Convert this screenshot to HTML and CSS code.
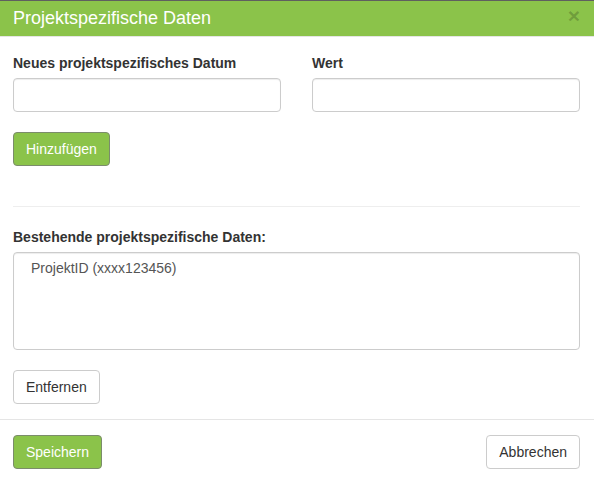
FILE: index.html
```html
<!DOCTYPE html>
<html lang="de">
<head>
<meta charset="utf-8">
<title>Projektspezifische Daten</title>
<link rel="stylesheet" href="styles.css">
</head>
<body>
<div class="modal">
  <div class="modal-header">
    <h4 class="modal-title">Projektspezifische Daten</h4>
    <span class="close">&times;</span>
  </div>
  <div class="modal-body">
    <div class="row">
      <div class="col">
        <label class="label">Neues projektspezifisches Datum</label>
        <div class="input"></div>
      </div>
      <div class="col">
        <label class="label">Wert</label>
        <div class="input"></div>
      </div>
    </div>
    <button class="btn btn-green btn-add">Hinzufügen</button>
    <hr class="divider">
    <label class="label">Bestehende projektspezifische Daten:</label>
    <div class="listbox">
      <div class="option">ProjektID (xxxx123456)</div>
    </div>
    <button class="btn btn-default btn-remove">Entfernen</button>
  </div>
  <div class="modal-footer">
    <button class="btn btn-green">Speichern</button>
    <button class="btn btn-default">Abbrechen</button>
  </div>
</div>
</body>
</html>
```

FILE: styles.css
```css
* { box-sizing: border-box; }

html, body {
  margin: 0;
  padding: 0;
  background: #fff;
}

body {
  font-family: "Liberation Sans", Arial, sans-serif;
  font-size: 14px;
  line-height: 20px;
  color: #333;
  border-top: 1px solid #5f5f5f;
}

.modal {
  width: 594px;
}

.modal-header {
  height: 36px;
  background: #8bc34a;
  border-bottom: 1px solid #e5e5e5;
  padding: 0 13px;
  display: flex;
  align-items: center;
  justify-content: space-between;
}

.modal-title {
  margin: 0;
  font-size: 18px;
  font-weight: normal;
  line-height: 35px;
  color: #fff;
}

.close {
  font-size: 21px;
  font-weight: bold;
  line-height: 1;
  color: rgba(0, 0, 0, 0.2);
  margin-right: 1px;
  margin-top: -7px;
}

.modal-body {
  padding: 16px 14px 15px 13px;
}

.row {
  display: flex;
  gap: 31px;
}

.col {
  flex: 1;
}

.label {
  display: block;
  font-weight: bold;
  margin-bottom: 5px;
}

.input {
  height: 34px;
  border: 1px solid #ccc;
  border-radius: 4px;
  background: #fff;
  box-shadow: inset 0 1px 1px rgba(0, 0, 0, 0.075);
}

.btn {
  display: inline-block;
  height: 34px;
  padding: 6px 12px;
  font-family: inherit;
  font-size: 14px;
  line-height: 20px;
  border-radius: 4px;
  border: 1px solid #ccc;
  cursor: pointer;
}

.btn-green {
  background: #8bc34a;
  border-color: #7b8c6b;
  color: #fff;
}

.btn-default {
  background: #fff;
  color: #333;
}

.btn-add {
  margin-top: 20px;
}

.divider {
  border: 0;
  border-top: 1px solid #eee;
  margin: 40px 0 20px;
}

.listbox {
  height: 98px;
  border: 1px solid #ccc;
  border-radius: 4px;
  padding: 5px 17px;
  color: #555;
  box-shadow: inset 0 1px 1px rgba(0, 0, 0, 0.075);
}

.btn-remove {
  margin-top: 20px;
}

.modal-footer {
  border-top: 1px solid #e5e5e5;
  padding: 15px 14px 15px 13px;
  display: flex;
  justify-content: space-between;
}
```
